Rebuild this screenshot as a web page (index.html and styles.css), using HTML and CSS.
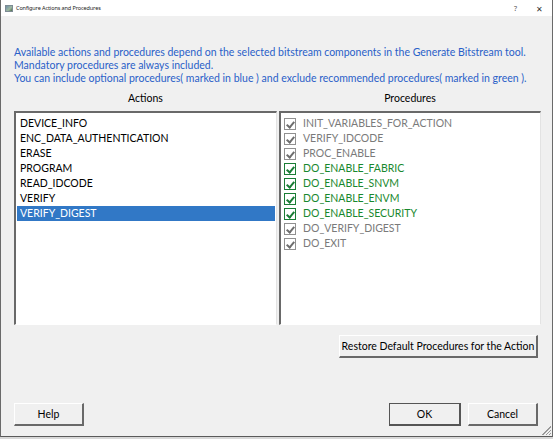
FILE: index.html
```html
<!DOCTYPE html>
<html>
<head>
<meta charset="utf-8">
<link rel="stylesheet" href="styles.css">
</head>
<body>
<div class="window">
  <div class="titlebar">
    <span class="app-icon"></span>
    <span class="title">Configure Actions and Procedures</span>
    <span class="tb-help">?</span>
    <span class="tb-close">✕</span>
  </div>
  <div class="dialog">
    <div class="info">
      <div>Available actions and procedures depend on the selected bitstream components in the Generate Bitstream tool.</div>
      <div>Mandatory procedures are always included.</div>
      <div>You can include optional procedures( marked in blue ) and exclude recommended procedures( marked in green ).</div>
    </div>
    <div class="columns">
      <div class="col col-left">
        <div class="col-head">Actions</div>
        <div class="listbox">
          <div class="row">DEVICE_INFO</div>
          <div class="row">ENC_DATA_AUTHENTICATION</div>
          <div class="row">ERASE</div>
          <div class="row">PROGRAM</div>
          <div class="row">READ_IDCODE</div>
          <div class="row">VERIFY</div>
          <div class="row selected">VERIFY_DIGEST</div>
        </div>
      </div>
      <div class="col col-right">
        <div class="col-head">Procedures</div>
        <div class="listbox">
          <div class="prow mand"><span class="cb"></span>INIT_VARIABLES_FOR_ACTION</div>
          <div class="prow mand"><span class="cb"></span>VERIFY_IDCODE</div>
          <div class="prow mand"><span class="cb"></span>PROC_ENABLE</div>
          <div class="prow rec"><span class="cb"></span>DO_ENABLE_FABRIC</div>
          <div class="prow rec"><span class="cb"></span>DO_ENABLE_SNVM</div>
          <div class="prow rec"><span class="cb"></span>DO_ENABLE_ENVM</div>
          <div class="prow rec"><span class="cb"></span>DO_ENABLE_SECURITY</div>
          <div class="prow mand"><span class="cb"></span>DO_VERIFY_DIGEST</div>
          <div class="prow mand"><span class="cb"></span>DO_EXIT</div>
        </div>
      </div>
    </div>
    <div class="restore-row">
      <button class="btn btn-restore">Restore Default Procedures for the Action</button>
    </div>
    <div class="footer">
      <button class="btn">Help</button>
      <div class="footer-right">
        <button class="btn btn-default">OK</button>
        <button class="btn">Cancel</button>
      </div>
    </div>
    <div class="grip"></div>
  </div>
</div>
</body>
</html>
```
FILE: styles.css
```css
* { box-sizing: border-box; }
html, body { margin: 0; padding: 0; }
body {
  width: 553px;
  height: 439px;
  background: #d8d8d8;
  font-family: Lato, "Noto Sans", sans-serif;
  overflow: hidden;
}
.window {
  width: 553px;
  height: 437px;
  background: #f0f0f0;
  border-left: 1px solid #6a6a6a;
  border-right: 1px solid #6a6a6a;
  border-bottom: 1px solid #5a5a5a;
  display: flex;
  flex-direction: column;
  position: relative;
}
.titlebar {
  height: 16px;
  background: #ffffff;
  display: flex;
  align-items: center;
  padding-left: 4px;
  font-size: 5.5px;
  color: #222;
  font-family: "Noto Sans", sans-serif;
}
.app-icon {
  width: 8px;
  height: 7px;
  background: linear-gradient(135deg, #6f8fa8 0%, #9fb9a0 60%, #4a6a4a 100%);
  border: 1px solid #7d8b94;
  margin-right: 3px;
}
.title { flex: 1; letter-spacing: -0.1px; }
.tb-help { font-size: 7px; color: #555; width: 22px; }
.tb-close { font-size: 8px; color: #333; width: 12px; margin-right: 4px; }
.dialog {
  flex: 1;
  padding: 30px 11px 0 13px;
  display: flex;
  flex-direction: column;
  position: relative;
}
.info {
  color: #2a5fc8;
  font-size: 10.5px;
  line-height: 13px;
  white-space: nowrap;
}
.columns {
  display: flex;
  gap: 2px;
  margin-top: 6px;
}
.col { display: flex; flex-direction: column; }
.col-left { width: 263px; }
.col-right { width: 262px; }
.col-head {
  font-size: 10.5px;
  line-height: 14px;
  height: 20px;
  text-align: center;
  color: #000;
}
.listbox {
  height: 214px;
  background: #fff;
  border-top: 2px solid #696969;
  border-left: 2px solid #696969;
  border-right: 1px solid #e3e3e3;
  border-bottom: 1px solid #ffffff;
  padding: 3px 1px 0 1px;
  font-size: 10.5px;
}
.row {
  height: 15px;
  line-height: 15px;
  padding-left: 3px;
  color: #000;
  white-space: nowrap;
}
.row.selected {
  background: #3178c6;
  color: #fff;
}
.prow {
  height: 15px;
  line-height: 15px;
  display: flex;
  align-items: center;
  padding-left: 2px;
  white-space: nowrap;
}
.prow.mand { color: #7a7a7a; }
.prow.rec { color: #18882e; }
.cb {
  width: 12px;
  height: 12px;
  border: 1px solid currentColor;
  margin-right: 7px;
  position: relative;
  background: #fff;
}
.cb::after {
  content: "";
  position: absolute;
  left: 3px;
  top: 1px;
  width: 3px;
  height: 6px;
  border-right: 2px solid currentColor;
  border-bottom: 2px solid currentColor;
  transform: rotate(40deg);
}
.prow.mand .cb { border-color: #909090; color: #6e6e6e; }
.prow.rec .cb { border-color: #1a7d35; }
.prow.rec .cb::after { border-color: #1a7d35; }
.restore-row {
  display: flex;
  justify-content: flex-end;
  padding-right: 3px;
  margin-top: 10px;
}
.btn {
  font-family: Lato, "Noto Sans", sans-serif;
  font-size: 10.5px;
  height: 23px;
  width: 70px;
  background: #f0f0f0;
  border-top: 1px solid #ffffff;
  border-left: 1px solid #ffffff;
  border-right: 2px solid #696969;
  border-bottom: 2px solid #696969;
  padding: 0;
  color: #000;
  white-space: nowrap;
}
.btn-restore { width: 199px; }
.btn-default {
  border: 1px solid #555;
  border-right: 2px solid #555;
  border-bottom: 2px solid #555;
  width: 72px;
}
.footer {
  display: flex;
  justify-content: space-between;
  align-items: center;
  margin-top: 45px;
  padding-right: 3px;
}
.footer-right { display: flex; gap: 7px; }
.grip {
  position: absolute;
  right: 1px;
  bottom: 1px;
  width: 10px;
  height: 10px;
  background: linear-gradient(135deg, transparent 0 55%, #999 55% 62%, transparent 62% 72%, #999 72% 79%, transparent 79% 88%, #999 88% 95%, transparent 95%);
}
```
